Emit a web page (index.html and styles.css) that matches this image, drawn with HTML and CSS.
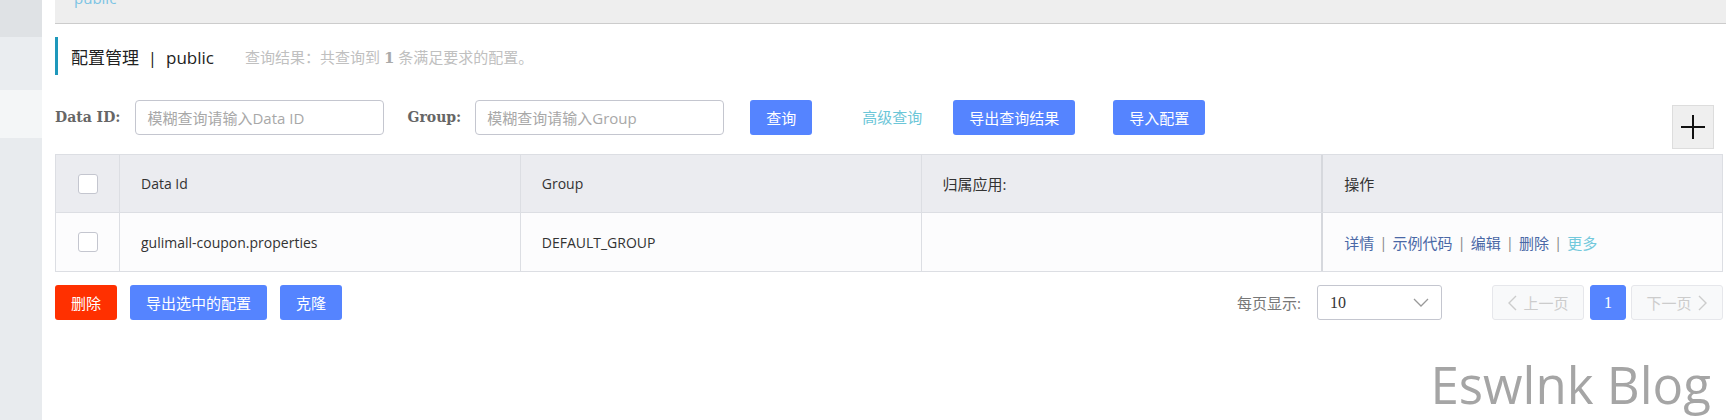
FILE: index.html
```html
<!DOCTYPE html>
<html lang="zh-CN">
<head>
  <meta charset="UTF-8">
  <meta name="viewport" content="width=device-width, initial-scale=1.0">
  <title>配置管理</title>
  <link rel="stylesheet" href="styles.css">
</head>
<body>
  <div class="layout">
    <div class="sidebar">
      <div class="menu-item top"></div>
      <div class="menu-item"></div>
      <div class="menu-item active"></div>
    </div>

    <div class="main">
      <div class="top-bar"><span class="crumb">public</span></div>

      <div class="content">
        <div class="page-title">
          <span class="title-text">配置管理&nbsp;&nbsp;|&nbsp;&nbsp;public</span>
          <span class="query-result">查询结果：共查询到 <b>1</b> 条满足要求的配置。</span>
        </div>

        <div class="search-row">
          <label class="field-label" for="dataId">Data ID:</label>
          <input class="text-input" id="dataId" placeholder="模糊查询请输入Data ID">
          <label class="field-label group-label" for="groupName">Group:</label>
          <input class="text-input" id="groupName" placeholder="模糊查询请输入Group">
          <button class="btn btn-primary query-btn">查询</button>
          <a class="link-advanced" href="#">高级查询</a>
          <button class="btn btn-primary export-btn">导出查询结果</button>
          <button class="btn btn-primary">导入配置</button>
          <button class="plus-btn" aria-label="新建">
            <svg width="26" height="26" viewBox="0 0 26 26"><path d="M13 1v24M1 13h24" stroke="#111" stroke-width="2" fill="none"/></svg>
          </button>
        </div>

        <div class="config-table">
          <div class="tr thead">
            <div class="td check-cell"><span class="checkbox"></span></div>
            <div class="td">Data Id</div>
            <div class="td">Group</div>
            <div class="td cjk">归属应用:</div>
            <div class="td cjk op-cell">操作</div>
          </div>
          <div class="tr tbody">
            <div class="td check-cell"><span class="checkbox"></span></div>
            <div class="td">gulimall-coupon.properties</div>
            <div class="td">DEFAULT_GROUP</div>
            <div class="td"></div>
            <div class="td cjk op-cell">
              <a class="op-link" href="#">详情</a><span class="sep">|</span><a class="op-link" href="#">示例代码</a><span class="sep">|</span><a class="op-link" href="#">编辑</a><span class="sep">|</span><a class="op-link" href="#">删除</a><span class="sep">|</span><a class="op-link more" href="#">更多</a>
            </div>
          </div>
        </div>

        <div class="footer-bar">
          <div class="batch-actions">
            <button class="btn btn-danger">删除</button>
            <button class="btn btn-primary">导出选中的配置</button>
            <button class="btn btn-primary">克隆</button>
          </div>
          <div class="pager">
            <span class="page-size-label">每页显示:</span>
            <div class="page-size">
              <span>10</span>
              <svg width="16" height="10" viewBox="0 0 16 10"><path d="M1 1l7 7 7-7" stroke="#999" stroke-width="1.3" fill="none"/></svg>
            </div>
            <button class="page-btn disabled">
              <svg width="10" height="16" viewBox="0 0 10 16"><path d="M9 1L2 8l7 7" stroke="#ccc" stroke-width="1.4" fill="none"/></svg>
              上一页
            </button>
            <button class="page-btn current">1</button>
            <button class="page-btn disabled">
              下一页
              <svg width="10" height="16" viewBox="0 0 10 16"><path d="M1 1l7 7-7 7" stroke="#ccc" stroke-width="1.4" fill="none"/></svg>
            </button>
          </div>
        </div>
      </div>
    </div>
  </div>

  <div class="watermark">Eswlnk Blog</div>
</body>
</html>
```

FILE: styles.css
```css
body {
  margin: 0;
  padding: 0;
  background-color: #fff;
  font-family: "Open Sans", "Noto Sans CJK SC", sans-serif;
  font-size: 15px;
  color: #333;
  overflow: hidden;
}
.layout {
  display: flex;
  height: 420px;
}
.sidebar {
  width: 42px;
  flex-shrink: 0;
  background-color: #e8ebee;
}
.menu-item {
  height: 53px;
  background-color: #eaedf0;
}
.menu-item.top {
  height: 37px;
  background-color: #dfe2e5;
}
.menu-item.active {
  height: 48px;
  background-color: #f4f6f7;
}
.main {
  flex: 1;
  padding-left: 13px;
}
.top-bar {
  height: 23px;
  background-color: #eeeeee;
  border-bottom: 1px solid #cccccc;
  overflow: hidden;
  padding-left: 19px;
}
.crumb {
  display: block;
  margin-top: -12px;
  font-size: 15px;
  line-height: 20px;
  color: #7cc4e4;
}
.content {
  padding-right: 3px;
}
.page-title {
  margin-top: 13px;
  height: 38px;
  border-left: 3px solid #1e98bb;
  padding-left: 13px;
  display: flex;
  align-items: center;
}
.title-text {
  font-size: 17px;
  color: #222;
}
.query-result {
  margin-left: 31px;
  font-size: 15px;
  color: #c0c0c0;
}
.query-result b {
  font-family: "DejaVu Serif", serif;
  color: #aaa;
}
.search-row {
  margin-top: 25px;
  display: flex;
  align-items: flex-start;
  height: 49px;
}
.field-label {
  font-family: "DejaVu Serif", serif;
  font-weight: bold;
  font-size: 14px;
  color: #666;
  line-height: 35px;
  margin-right: 15px;
}
.group-label {
  margin-left: 23px;
  margin-right: 14px;
}
.text-input {
  width: 249px;
  height: 35px;
  box-sizing: border-box;
  border: 1px solid #c4c6cf;
  border-radius: 4px;
  padding: 0 11px;
  font-family: inherit;
  font-size: 15px;
  color: #333;
}
.text-input::placeholder {
  color: #a8a8a8;
}
.btn {
  height: 35px;
  padding: 0 16px;
  border: none;
  border-radius: 3px;
  font-family: inherit;
  font-size: 15px;
  color: #fff;
  cursor: pointer;
}
.btn-primary {
  background-color: #5584ff;
}
.btn-danger {
  background-color: #ff3000;
}
.query-btn {
  margin-left: 26px;
}
.link-advanced {
  margin-left: 50px;
  line-height: 35px;
  color: #6cc6d8;
  text-decoration: none;
}
.export-btn {
  margin-left: 31px;
  margin-right: 38px;
}
.plus-btn {
  margin-left: auto;
  margin-right: 9px;
  margin-top: 5px;
  width: 42px;
  height: 44px;
  background-color: #efefef;
  border: 1px solid #dddddd;
  padding: 0;
  display: flex;
  align-items: center;
  justify-content: center;
}
.config-table {
  margin-top: 5px;
  border: 1px solid #dcdee3;
}
.tr {
  display: grid;
  grid-template-columns: 63px 1fr 1fr 1fr 1fr;
}
.thead {
  height: 57px;
  background-color: #ebecf0;
  border-bottom: 1px solid #dcdee3;
}
.tbody {
  height: 58px;
  background-color: #fcfcfd;
}
.td {
  display: flex;
  align-items: center;
  padding-left: 21px;
  border-left: 1px solid #dcdee3;
  font-size: 14px;
  color: #333;
  white-space: nowrap;
}
.td.cjk {
  font-size: 15px;
}
.check-cell {
  border-left: none;
  padding-left: 0;
  justify-content: center;
}
.op-cell {
  border-left: 2px solid #d6d8dd;
}
.checkbox {
  width: 18px;
  height: 18px;
  border: 1px solid #c4c6cf;
  border-radius: 3px;
  background-color: #fff;
}
.op-link {
  color: #4a68a6;
  text-decoration: none;
}
.op-link.more {
  color: #73c9dc;
}
.sep {
  color: #888;
  margin: 0 5px;
}
.footer-bar {
  margin-top: 13px;
  display: flex;
  justify-content: space-between;
}
.batch-actions {
  display: flex;
  gap: 13px;
}
.pager {
  display: flex;
  align-items: center;
}
.page-size-label {
  color: #777;
  font-size: 15px;
  margin-right: 16px;
}
.page-size {
  width: 125px;
  height: 35px;
  box-sizing: border-box;
  border: 1px solid #c4c6cf;
  border-radius: 3px;
  display: flex;
  align-items: center;
  justify-content: space-between;
  padding: 0 12px;
  font-family: "Liberation Serif", serif;
  font-size: 16px;
  color: #333;
  margin-right: 50px;
}
.page-btn {
  height: 35px;
  box-sizing: border-box;
  border: 1px solid #e6e7eb;
  border-radius: 3px;
  background-color: #f8f9fa;
  font-family: inherit;
  font-size: 15px;
  color: #ccc;
  padding: 0 12px;
  display: flex;
  align-items: center;
  gap: 6px;
}
.page-btn.disabled {
  width: 92px;
  justify-content: center;
}
.page-btn.current {
  width: 36px;
  margin: 0 5px 0 6px;
  background-color: #5584ff;
  border-color: #5584ff;
  color: #fff;
  font-family: "Liberation Serif", serif;
  font-size: 16px;
  justify-content: center;
  padding: 0;
}
.watermark {
  position: absolute;
  right: 15px;
  top: 359px;
  font-family: "Open Sans", sans-serif;
  font-size: 51px;
  line-height: 51px;
  color: #a5a5a5;
}
```
